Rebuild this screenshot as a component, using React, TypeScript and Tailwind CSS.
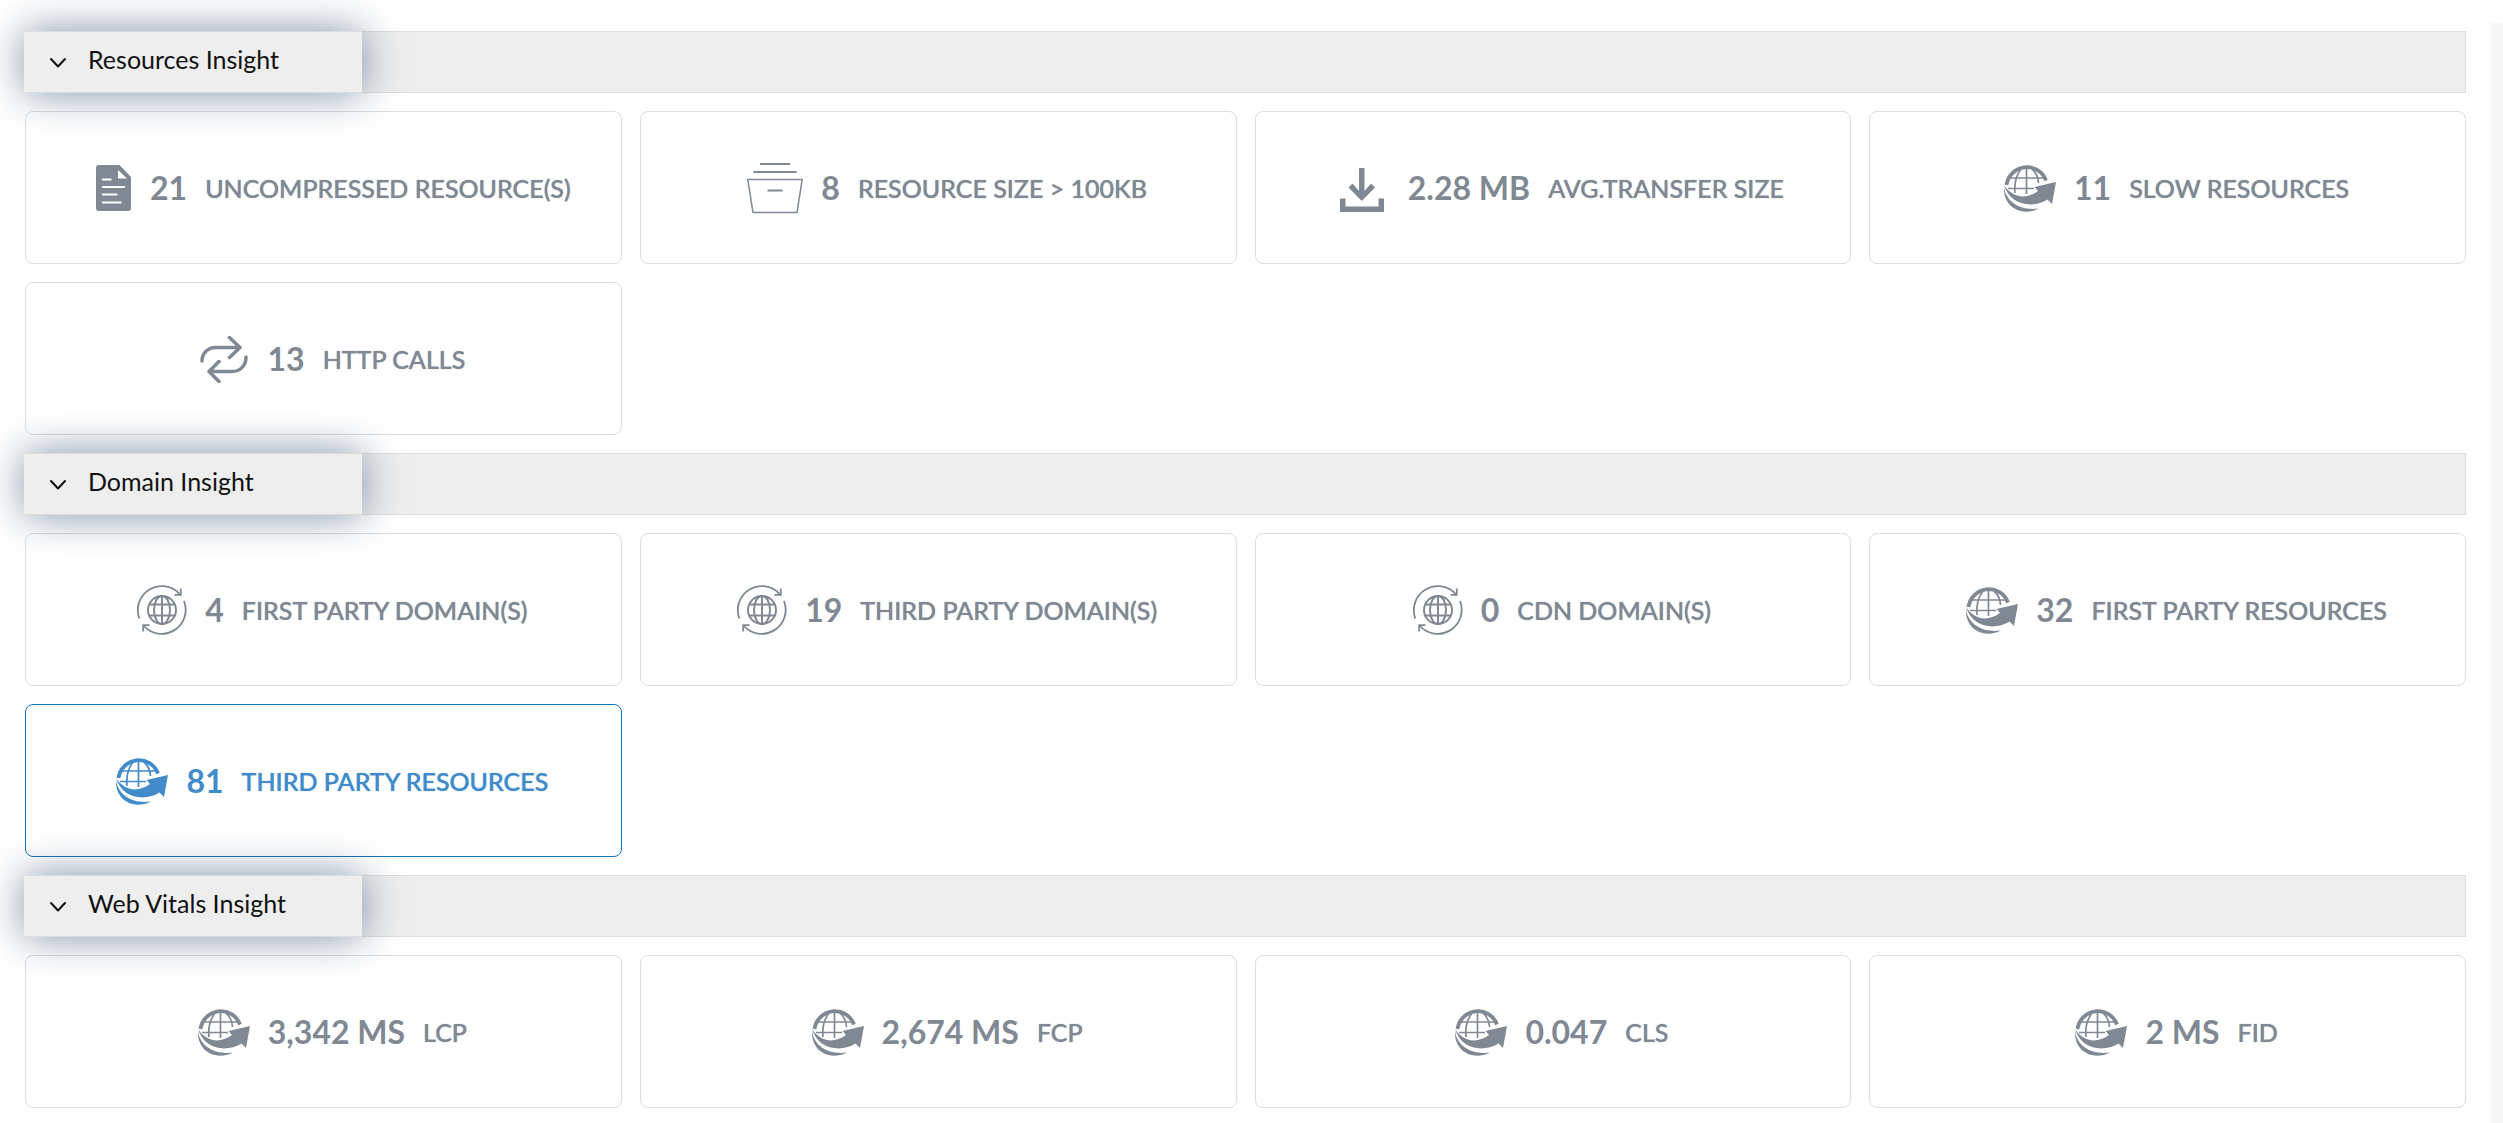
import type { ReactNode } from "react";

type IconName = "document" | "archive" | "download" | "globeArrow" | "repeat" | "globeSync";

type Metric = {
  icon: IconName;
  value: string;
  label: string;
  active?: boolean;
};

type Section = {
  title: string;
  metrics: Metric[];
};

const sections: Section[] = [
  {
    title: "Resources Insight",
    metrics: [
      { icon: "document", value: "21", label: "UNCOMPRESSED RESOURCE(S)" },
      { icon: "archive", value: "8", label: "RESOURCE SIZE > 100KB" },
      { icon: "download", value: "2.28 MB", label: "AVG.TRANSFER SIZE" },
      { icon: "globeArrow", value: "11", label: "SLOW RESOURCES" },
      { icon: "repeat", value: "13", label: "HTTP CALLS" },
    ],
  },
  {
    title: "Domain Insight",
    metrics: [
      { icon: "globeSync", value: "4", label: "FIRST PARTY DOMAIN(S)" },
      { icon: "globeSync", value: "19", label: "THIRD PARTY DOMAIN(S)" },
      { icon: "globeSync", value: "0", label: "CDN DOMAIN(S)" },
      { icon: "globeArrow", value: "32", label: "FIRST PARTY RESOURCES" },
      { icon: "globeArrow", value: "81", label: "THIRD PARTY RESOURCES", active: true },
    ],
  },
  {
    title: "Web Vitals Insight",
    metrics: [
      { icon: "globeArrow", value: "3,342 MS", label: "LCP" },
      { icon: "globeArrow", value: "2,674 MS", label: "FCP" },
      { icon: "globeArrow", value: "0.047", label: "CLS" },
      { icon: "globeArrow", value: "2 MS", label: "FID" },
    ],
  },
];

const icons: Record<IconName, ReactNode> = {
  document: (
    <svg viewBox="-2 0 38 46" className="h-[46px] w-[38px]" fill="currentColor" aria-hidden="true">
      <path
        fillRule="evenodd"
        d="M3 0H23.500L35 12V43A3 3 0 0 1 32 46H3A3 3 0 0 1 0 43V3A3 3 0 0 1 3 0ZM22 5V13.500H31ZM6 13.500V15.500H15.500V13.500ZM6 21V23H29V21ZM6 28.500V30.500H21.500V28.500ZM6 36.500V38.500H25.500V36.500Z"
      />
    </svg>
  ),
  archive: (
    <svg viewBox="0 0 56 52" className="h-[52px] w-14" fill="none" stroke="currentColor" strokeWidth="1.500" aria-hidden="true">
      <path d="M13 2H43M6.500 10H49.500M20.500 28.500H35.500" strokeWidth="2" />
      <path d="M.8 17.500H55.200L50 50.500H6Z" />
    </svg>
  ),
  download: (
    <svg viewBox="0 -4 50 48" className="h-12 w-[50px]" fill="currentColor" aria-hidden="true">
      <path d="M19 0H24.500V23L31 15.500L35 19.500L21.750 33L8.500 19.500L12.500 15.500L19 23ZM0 30.500H5.500V38.500H38.500V30.500H44V44H0Z" />
    </svg>
  ),
  globeArrow: (
    <svg viewBox="0 -2 52 50" className="h-[50px] w-[52px]" fill="currentColor" aria-hidden="true">
      <g fill="none" stroke="currentColor">
        <path d="M2.500 20A20.500 20.500 0 0 1 42 15.500" strokeWidth="3.800" />
        <path d="M5 13H40M4 23.500H30M22.500 3V29M17 4Q9.500 14 11 28M28 4Q34 9 34.500 18" strokeWidth="1.700" />
      </g>
      <path d="M0 20C7 31 20 36 34 26L30.500 22L52 17L48 39L43.500 34.500C28 44 6 40 0 20Z" />
      <path d="M0 22C2 38 18 46 35 43.500C18 52 -1 43 0 22Z" />
    </svg>
  ),
  repeat: (
    <svg
      viewBox="0 0 50 48"
      className="h-12 w-[50px]"
      fill="none"
      stroke="currentColor"
      strokeWidth="3.500"
      strokeLinecap="round"
      strokeLinejoin="round"
      aria-hidden="true"
    >
      <path d="M2 26C2 18 8 12.500 16 12.500H40M29.500 2.500L40 12.500L29.500 22.500M46 22C46 31 40 36.500 32 36.500H9M19 26.500L9 36.500L19 46.500" />
    </svg>
  ),
  globeSync: (
    <svg viewBox="0 0 50 50" className="h-[50px] w-[50px]" fill="none" stroke="currentColor" strokeWidth="2" aria-hidden="true">
      <circle cx="25" cy="25" r="14" />
      <ellipse cx="25" cy="25" rx="8" ry="14" />
      <path d="M25 11V39M12.500 19.500H37.500M12.500 30.500H37.500" />
      <path d="M2.300 33.500A24 24 0 0 1 43 9.500M47 16A24 24 0 0 1 6.500 40.500" strokeWidth="1.800" />
      <path d="M43.800 3.500V9.800H37.500M6.200 46.500V40.200H12.500" strokeWidth="1.800" />
    </svg>
  ),
};

const SectionHeader = ({ title }: { title: string }) => (
  <div className="flex h-[62px] border border-[#dcdddf] bg-[#eeeeee]">
    <button
      type="button"
      className="relative z-10 -my-px -ml-0.5 flex w-[338px] items-center gap-5 border-y border-[#dcdddf] bg-[#eeeeee] pb-1.5 pl-6 text-left shadow-[0_0_42px_rgba(60,85,115,0.65)]"
    >
      <svg viewBox="0 0 20 12" className="mt-2 h-3 w-5" fill="none" stroke="currentColor" strokeWidth="2" strokeLinecap="round" strokeLinejoin="round" aria-hidden="true">
        <path d="M3 2L10 9.500L17 2" />
      </svg>
      <span className="text-[25px] leading-8">{title}</span>
    </button>
  </div>
);

const MetricCard = ({ metric }: { metric: Metric }) => (
  <button
    type="button"
    className={`flex h-[153px] items-center justify-center rounded-lg border bg-white pl-[18px] ${
      metric.active ? "border-[#0f75c1] text-[#428bca]" : "border-[#dcdddf] text-[#7f8893]"
    }`}
  >
    {icons[metric.icon]}
    <span className="ml-[18px] text-[32px] leading-10 font-bold">{metric.value}</span>
    <span className="ml-[18px] text-[25px] leading-10 font-medium [text-shadow:0_0_1px_currentColor]">{metric.label}</span>
  </button>
);

export default function App() {
  return (
    <div className="flex min-h-screen bg-white pt-[23px] font-['Lato',sans-serif] text-[#111111]">
      <main className="grow space-y-[18px] pt-2 pr-[25px] pb-[15px] pl-[25px]">
        {sections.map((section) => (
          <section key={section.title} className="space-y-[18px]">
            <SectionHeader title={section.title} />
            <div className="grid grid-cols-4 gap-[18px]">
              {section.metrics.map((metric) => (
                <MetricCard key={metric.label} metric={metric} />
              ))}
            </div>
          </section>
        ))}
      </main>
      <div className="w-3 shrink-0 bg-[#f7f7f7]" />
    </div>
  );
}
